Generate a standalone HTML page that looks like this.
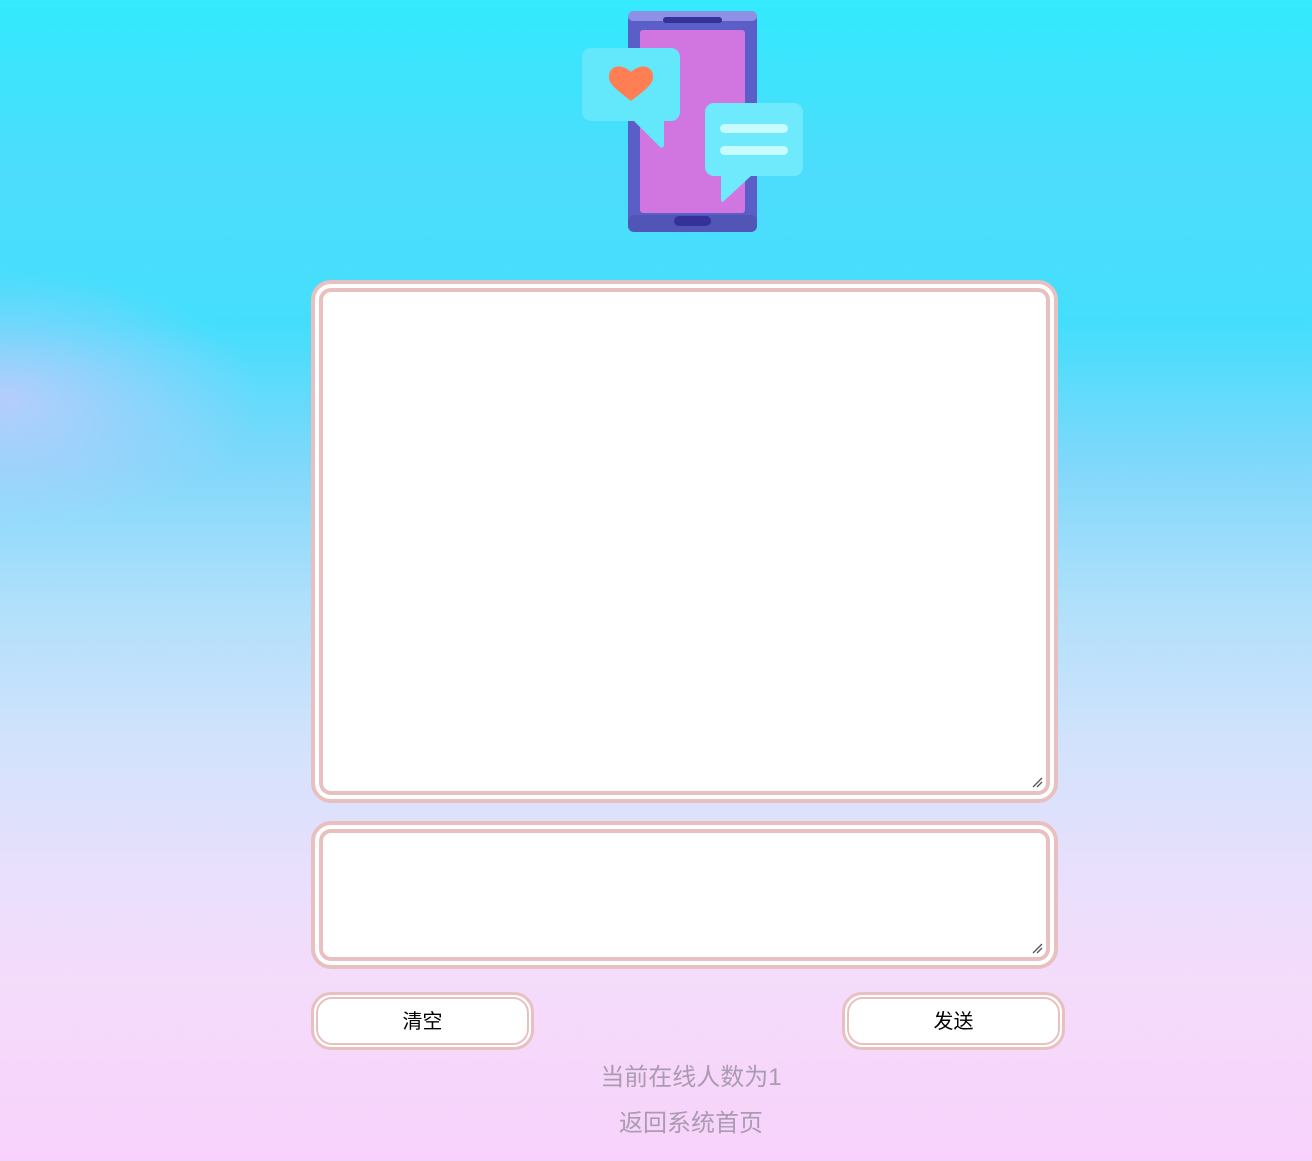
<!DOCTYPE html>
<html><head><meta charset="utf-8">
<style>
html,body{margin:0;padding:0;width:1312px;height:1161px;overflow:hidden}
body{font-family:"Liberation Sans","Noto Sans CJK SC",sans-serif;
background:
radial-gradient(ellipse 260px 130px at 0px 400px, rgba(210,200,252,0.75), rgba(210,200,252,0)),
linear-gradient(180deg,#33eafd 0%,#4ddcfc 15%,#44defc 28%,#80d8fb 40%,#b0e0fb 52%,#d2e2fc 64%,#e6e0fc 74%,#f4dcfb 84%,#f8d2fb 100%);position:relative}
.box{position:absolute;left:311px;width:747px;border:4px solid #e9c0c0;border-radius:20px;background:#fff;padding:4px;box-sizing:border-box}
.box div{width:100%;height:100%;border:4px solid #e9c0c0;border-radius:12px;box-sizing:border-box;position:relative}
.grip{position:absolute;right:3px;bottom:3px;width:12px;height:12px}
.btn{position:absolute;top:992px;width:223px;height:58px;border:3px solid #e9c0c0;border-radius:20px;background:#fff;padding:2px;box-sizing:border-box}
.btn div{width:100%;height:100%;border:2px solid #e9c0c0;border-radius:16px;box-sizing:border-box;text-align:center;line-height:46px;font-size:20px;color:#000}
.t{position:absolute;left:0;width:1382px;text-align:center;font-size:24px;color:#ab9bb0}
</style></head><body>
<svg style="position:absolute;left:570px;top:0" width="250" height="240" viewBox="0 0 250 240">
<rect x="58" y="11" width="129" height="221" rx="8" fill="#5b5ec7"/>
<rect x="58" y="11" width="129" height="10" rx="5" fill="#8e90e6"/>
<rect x="58" y="215" width="129" height="17" rx="6" fill="#5155b6"/>
<rect x="93" y="17" width="59" height="6" rx="3" fill="#35309a"/>
<rect x="70" y="30" width="105" height="183" rx="3" fill="#d176e0"/>
<rect x="104" y="216" width="37" height="10" rx="5" fill="#35309a"/>
<rect x="12" y="48" width="98" height="73" rx="9" fill="#62e8fa"/>
<path d="M63 120 L94 120 L94 145 Q93 150 89 146 Z" fill="#62e8fa"/>
<path d="M61 101 C50 92 38 85 39 76 C39 67 50 62 61 72 C72 62 83 67 83 76 C84 85 72 92 61 101 Z" fill="#ff7e54"/>
<rect x="135" y="103" width="98" height="73" rx="9" fill="#6feafc"/>
<path d="M151 175 L182 175 L155 200 Q151 204 151 199 Z" fill="#6feafc"/>
<rect x="150" y="124" width="68" height="9" rx="4.5" fill="#c6fcff"/>
<rect x="150" y="146" width="68" height="9" rx="4.5" fill="#c6fcff"/>
</svg>
<div class="box" style="top:280px;height:523px"><div><svg class="grip" viewBox="0 0 12 12"><path d="M2 11L11 2M6 11L11 6" stroke="#555" stroke-width="1.3"/></svg></div></div>
<div class="box" style="top:821px;height:148px"><div><svg class="grip" viewBox="0 0 12 12"><path d="M2 11L11 2M6 11L11 6" stroke="#555" stroke-width="1.3"/></svg></div></div>
<div class="btn" style="left:311px"><div>清空</div></div>
<div class="btn" style="left:842px"><div>发送</div></div>
<div class="t" style="top:1057px">当前在线人数为1</div>
<div class="t" style="top:1103px">返回系统首页</div>
</body></html>
